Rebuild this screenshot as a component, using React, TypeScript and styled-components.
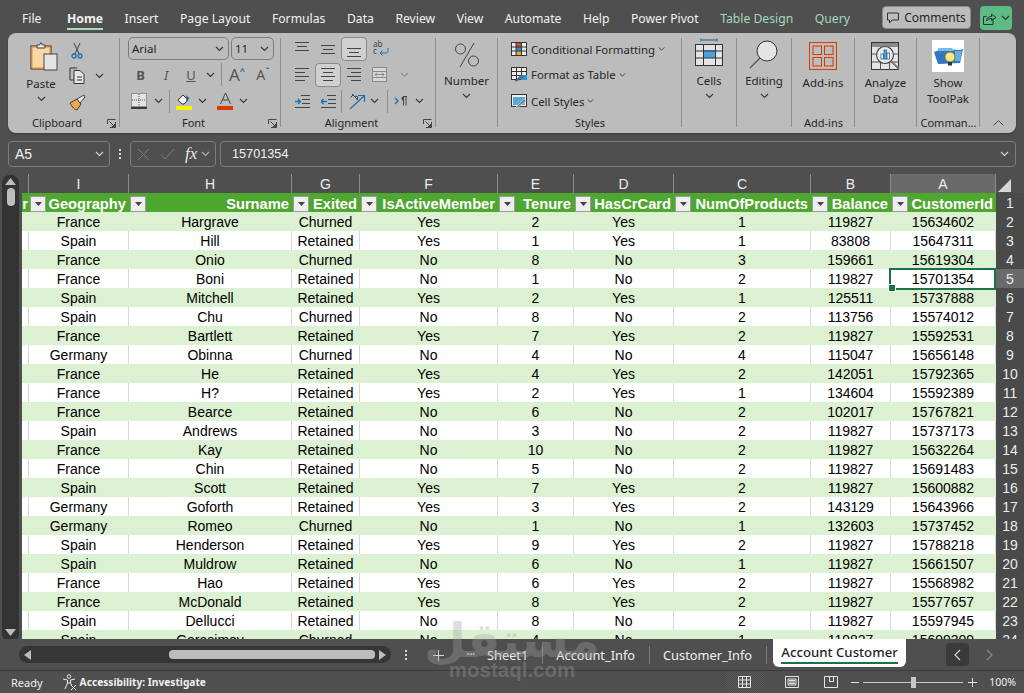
import styled, { createGlobalStyle } from "styled-components";

const GlobalStyle = createGlobalStyle`
  html, body { margin: 0; padding: 0; height: 100%; background: #4f4f4f; overflow: hidden; }
  * { box-sizing: border-box; }
`;

const UI = `"Noto Sans", sans-serif`;
const CELL = `"Liberation Sans", Arial, sans-serif`;
const GRID = "7px 100px 163px 68px 138px 76px 100px 137px 80px 105px 28px";

const columns = ["", "I", "H", "G", "F", "E", "D", "C", "B", "A"];
const headers = ["r", "Geography", "Surname", "Exited", "IsActiveMember", "Tenure", "HasCrCard", "NumOfProducts", "Balance", "CustomerId"];

const rows = [
  ["France", "Hargrave", "Churned", "Yes", "2", "Yes", "1", "119827", "15634602"],
  ["Spain", "Hill", "Retained", "Yes", "1", "Yes", "1", "83808", "15647311"],
  ["France", "Onio", "Churned", "No", "8", "No", "3", "159661", "15619304"],
  ["France", "Boni", "Retained", "No", "1", "No", "2", "119827", "15701354"],
  ["Spain", "Mitchell", "Retained", "Yes", "2", "Yes", "1", "125511", "15737888"],
  ["Spain", "Chu", "Churned", "No", "8", "No", "2", "113756", "15574012"],
  ["France", "Bartlett", "Retained", "Yes", "7", "Yes", "2", "119827", "15592531"],
  ["Germany", "Obinna", "Churned", "No", "4", "No", "4", "115047", "15656148"],
  ["France", "He", "Retained", "Yes", "4", "Yes", "2", "142051", "15792365"],
  ["France", "H?", "Retained", "Yes", "2", "Yes", "1", "134604", "15592389"],
  ["France", "Bearce", "Retained", "No", "6", "No", "2", "102017", "15767821"],
  ["Spain", "Andrews", "Retained", "No", "3", "No", "2", "119827", "15737173"],
  ["France", "Kay", "Retained", "No", "10", "No", "2", "119827", "15632264"],
  ["France", "Chin", "Retained", "No", "5", "No", "2", "119827", "15691483"],
  ["Spain", "Scott", "Retained", "Yes", "7", "Yes", "2", "119827", "15600882"],
  ["Germany", "Goforth", "Retained", "Yes", "3", "Yes", "2", "143129", "15643966"],
  ["Germany", "Romeo", "Churned", "No", "1", "No", "1", "132603", "15737452"],
  ["Spain", "Henderson", "Retained", "Yes", "9", "Yes", "2", "119827", "15788218"],
  ["Spain", "Muldrow", "Retained", "No", "6", "No", "1", "119827", "15661507"],
  ["France", "Hao", "Retained", "Yes", "6", "Yes", "2", "119827", "15568982"],
  ["France", "McDonald", "Retained", "Yes", "8", "Yes", "2", "119827", "15577657"],
  ["Spain", "Dellucci", "Retained", "No", "8", "No", "2", "119827", "15597945"],
  ["Spain", "Gerasimov", "Churned", "No", "4", "No", "1", "119827", "15699309"],
];

const menu = ["File", "Home", "Insert", "Page Layout", "Formulas", "Data", "Review", "View", "Automate", "Help", "Power Pivot"];

// small drawings used across the ribbon
const Chevron = ({ color = "#3a3a3a" }: { color?: string }) => (
  <svg width="9" height="6" viewBox="0 0 9 6">
    <path d="M1 1l3.500 3.500L8 1" fill="none" stroke={color} strokeWidth="1.200" />
  </svg>
);

const Launcher = () => (
  <svg width="9" height="9" viewBox="0 0 9 9">
    <path d="M.5 5V.5H8.500M.5.5" fill="none" stroke="#444" />
    <path d="M8.500 3V8.500H3M2.500 2.500l5 5M5 7.500h2.500V5" fill="none" stroke="#444" />
  </svg>
);

const PasteIcon = () => (
  <svg width="28" height="30" viewBox="0 0 28 30">
    <rect x="1" y="5" width="20" height="23" fill="#fbd9a8" stroke="#3a2a18" />
    <rect x="2" y="6" width="18" height="21" fill="#f9d7a6" stroke="#ee8a2c" />
    <path d="M7 7V4h2.500L11 1.500 12.500 4H15v3z" fill="#e6e6e6" stroke="#444" />
    <rect x="14" y="13" width="13" height="16" fill="#e4e4e4" stroke="#444" />
  </svg>
);

const CutIcon = () => (
  <svg width="12" height="17" viewBox="0 0 12 17">
    <path d="M3 1l5 11M9 1L4 12" stroke="#555" strokeWidth="1.100" fill="none" />
    <circle cx="3" cy="14" r="2" fill="none" stroke="#1c70b0" strokeWidth="1.300" />
    <circle cx="9" cy="14" r="2" fill="none" stroke="#1c70b0" strokeWidth="1.300" />
  </svg>
);

const CopyIcon = () => (
  <svg width="17" height="17" viewBox="0 0 17 17">
    <path d="M8 1H1v12h4" fill="none" stroke="#333" />
    <path d="M5 3.500h6l4 4v9H5z" fill="#e6e6e6" stroke="#333" />
    <path d="M8 10h5M8 13h5" stroke="#333" />
  </svg>
);

const PainterIcon = () => (
  <svg width="17" height="17" viewBox="0 0 17 17">
    <path d="M1 9l7-4 4 5-4 6c-2 0-5-3-7-7z" fill="#f0a848" stroke="#4a3a28" />
    <path d="M8 5l7-4 1 2-5 6z" fill="#e8e8e8" stroke="#444" />
  </svg>
);

const BorderIcon = () => (
  <svg width="16" height="16" viewBox="0 0 16 16">
    <rect x=".5" y=".5" width="15" height="13" fill="#e4e4e4" stroke="#555" strokeDasharray="1 1" />
    <path d="M8 1v13M1 7h14" stroke="#555" strokeDasharray="1 1" />
    <path d="M0 15h16" stroke="#111" strokeWidth="1.500" />
  </svg>
);

const FillIcon = () => (
  <svg width="17" height="17" viewBox="0 0 17 17">
    <path d="M2 7l5-5 5 5-4 4H6z" fill="#f2f2f2" stroke="#333" />
    <path d="M11 8V4l2 2" fill="none" stroke="#1c5f98" strokeWidth="1.400" />
    <rect x="0" y="13" width="16" height="4" fill="#f5f500" />
  </svg>
);

const FontColorIcon = () => (
  <svg width="17" height="17" viewBox="0 0 17 17">
    <path d="M3.500 11L8.500 0l5 11M5.500 7h6" fill="none" stroke="#444" />
    <rect x="0" y="13" width="16" height="4" fill="#d83b01" />
  </svg>
);

const LinesIcon = ({ kind }: { kind: "left" | "center" | "right" | "top" | "middle" | "bottom" }) => {
  const paths = {
    left: "M0 1.500h14M0 5.500h10M0 9.500h14M0 13.500h10",
    center: "M0 1.500h14M2 5.500h10M0 9.500h14M2 13.500h10",
    right: "M0 1.500h14M4 5.500h10M0 9.500h14M4 13.500h10",
    top: "M0 .5h14M2 4.500h10M0 8.500h14",
    middle: "M0 3.500h14M2 7.500h10M0 11.500h14",
    bottom: "M0 6.500h14M2 10.500h10M0 14.500h14",
  };
  return (
    <svg width="14" height="15" viewBox="0 0 14 15">
      <path d={paths[kind]} stroke="#444" fill="none" />
    </svg>
  );
};

const WrapIcon = () => (
  <svg width="16" height="18" viewBox="0 0 16 18">
    <text x="0" y="7" fontSize="8" fill="#444" fontFamily="Noto Sans">ab</text>
    <text x="0" y="14" fontSize="8" fill="#444" fontFamily="Noto Sans">c</text>
    <path d="M15 8v2.500c0 2-1 2.500-2.500 2.500H7M9.500 10.500L7 13l2.500 2.500" fill="none" stroke="#1c70b0" />
  </svg>
);

const MergeIcon = () => (
  <svg width="15" height="15" viewBox="0 0 15 15">
    <rect x=".5" y=".5" width="14" height="14" fill="#d8d8d8" stroke="#8a8a8a" />
    <path d="M.5 4.500h14M.5 10.500h14" stroke="#8a8a8a" />
    <path d="M3 7.500h9M5 5.500l-2 2 2 2M10 5.500l2 2-2 2" fill="none" stroke="#8a8a8a" />
  </svg>
);

const IndentIcon = ({ out }: { out?: boolean }) => (
  <svg width="15" height="13" viewBox="0 0 15 13">
    <path d="M6 .5h9M7 4.500h8M7 8.500h8M0 12.500h15" stroke="#444" fill="none" />
    <path d={out ? "M6 6.500H0M2.500 4L0 6.500 2.500 9" : "M0 6.500h5.500M3 4l2.500 2.500L3 9"} stroke="#1c70b0" strokeWidth="1.300" fill="none" />
  </svg>
);

const OrientIcon = () => (
  <svg width="17" height="17" viewBox="0 0 17 17">
    <path d="M3 1l6 6M1.500 4.500l3-3M6 3l3 1-1 3" fill="none" stroke="#444" />
    <path d="M1 16L15 3M9 2.500h6.500V9" fill="none" stroke="#1c70b0" strokeWidth="1.200" />
  </svg>
);

const RtlIcon = () => (
  <svg width="14" height="14" viewBox="0 0 14 14">
    <path d="M1 4L4 7 1 10" fill="none" stroke="#1c70b0" strokeWidth="1.400" />
    <path d="M9 2.500h4M9.500 2.500v9M12 2.500v9" fill="none" stroke="#444" />
    <path d="M9.500 2.500a2 2 0 000 4z" fill="#444" />
  </svg>
);

const PercentIcon = () => (
  <svg width="26" height="26" viewBox="0 0 26 26">
    <circle cx="6.500" cy="7" r="5" fill="none" stroke="#444" />
    <circle cx="19.500" cy="19" r="5" fill="none" stroke="#444" />
    <path d="M20 1L6 25" stroke="#444" />
  </svg>
);

const CondIcon = () => (
  <svg width="16" height="14" viewBox="0 0 16 14">
    <rect x=".5" y=".5" width="15" height="13" fill="#efefef" stroke="#333" />
    <rect x="5" y="5" width="5.500" height="4" fill="#2d8fd5" />
    <rect x="5" y="1" width="5.500" height="4" fill="#d9482b" />
    <rect x="5" y="9" width="5.500" height="4" fill="#e7a23a" />
    <path d="M5 .5v13M10.500.5v13M.5 5h15M.5 9h15" stroke="#333" />
  </svg>
);

const TableIcon = () => (
  <svg width="16" height="15" viewBox="0 0 16 15">
    <rect x=".5" y=".5" width="15" height="12" fill="#efefef" stroke="#333" />
    <path d="M5.500.5v12M10.500.5v12M.5 4.500h15M.5 8.500h15" stroke="#333" />
    <rect x="10" y="8" width="6" height="5" fill="#2d8fd5" />
    <path d="M4 14l6-6 2 2-6 4z" fill="#6b6b6b" stroke="#1c5f98" strokeWidth=".6" />
  </svg>
);

const StyleIcon = () => (
  <svg width="16" height="15" viewBox="0 0 16 15">
    <rect x=".5" y=".5" width="15" height="12" fill="#f0f0f0" stroke="#333" />
    <rect x="2" y="3" width="12" height="8" fill="#58a9e0" />
    <path d="M4 14l9-9 2 2-9 7z" fill="#7a7a7a" stroke="#e8e8e8" strokeWidth=".6" />
  </svg>
);

const CellsIcon = () => (
  <svg width="28" height="28" viewBox="0 0 28 28">
    <path d="M6 .5v3M22 .5v3M6 2h16" stroke="#1c5f98" fill="none" />
    <rect x=".5" y="6.500" width="27" height="21" fill="#e4e4e4" stroke="#333" />
    <rect x="8" y="12" width="13" height="8" fill="#4f9fdc" />
    <path d="M8.500 6.500v21M20.500 6.500v21M.5 13h27M.5 20h27" stroke="#333" />
  </svg>
);

const SearchIcon = () => (
  <svg width="30" height="30" viewBox="0 0 30 30">
    <circle cx="18" cy="11" r="10" fill="#e4e4e4" stroke="#333" />
    <path d="M11 18L1 28" stroke="#555" strokeWidth="1.200" />
  </svg>
);

const AddinsIcon = () => (
  <svg width="28" height="28" viewBox="0 0 28 28">
    <rect x=".5" y=".5" width="27" height="27" fill="none" stroke="#d83b01" />
    <rect x="4" y="4" width="8.500" height="8.500" fill="none" stroke="#d83b01" />
    <rect x="15.500" y="4" width="8.500" height="8.500" fill="none" stroke="#d83b01" />
    <rect x="4" y="15.500" width="8.500" height="8.500" fill="none" stroke="#d83b01" />
    <rect x="15.500" y="15.500" width="8.500" height="8.500" fill="none" stroke="#d83b01" />
  </svg>
);

const AnalyzeIcon = () => (
  <svg width="29" height="29" viewBox="0 0 29 29">
    <rect x=".5" y=".5" width="27" height="27" fill="#e4e4e4" stroke="#333" />
    <rect x="1" y="1" width="26" height="4" fill="#8a8a8a" />
    <path d="M9.500 5v23M18.500 5v23M1 12h26M1 20h26" stroke="#555" />
    <circle cx="14" cy="13" r="8.500" fill="#ececec" stroke="#444" strokeWidth="1.200" />
    <path d="M20 19l8 8" stroke="#777" strokeWidth="2" />
    <rect x="10" y="12" width="2.500" height="5" fill="#fff" stroke="#1c5f98" strokeWidth=".8" />
    <rect x="13" y="8" width="2.500" height="9" fill="#5aa6e0" stroke="#1c5f98" strokeWidth=".8" />
    <rect x="16" y="11" width="2.500" height="6" fill="#fff" stroke="#1c5f98" strokeWidth=".8" />
  </svg>
);

const ToolPakIcon = () => (
  <svg width="32" height="32" viewBox="0 0 32 32">
    <rect width="32" height="32" fill="#fff" />
    <path d="M2 12l8-3 18 1 3-1-3 14-22 1z" fill="#2f78c0" />
    <path d="M6 8h14l2 3H6z" fill="#7cb8e6" />
    <path d="M23 11h7l-2 10h-5z" fill="#6aaee0" />
    <circle cx="18" cy="17" r="5" fill="#f7e88a" stroke="#8a7a30" />
    <rect x="16" y="22" width="4" height="3.500" fill="#333" />
  </svg>
);

const AccessIcon = () => (
  <svg width="15" height="16" viewBox="0 0 15 16">
    <circle cx="7" cy="2.500" r="1.800" fill="none" stroke="#e8e8e8" />
    <path d="M1 5l4.500 1v3L3 15M13 5l-4.500 1v3l1 2M5.500 9h3" fill="none" stroke="#e8e8e8" />
    <path d="M9 11l5 5M14 11l-5 5" stroke="#e8e8e8" />
  </svg>
);

const FilterArrow = () => (
  <svg width="7" height="4" viewBox="0 0 7 4">
    <path d="M0 0h7L3.500 4z" fill="#444" />
  </svg>
);

export default function App() {
  return (
    <Page>
      <GlobalStyle />
      <MenuBar>
        {menu.map((m) => (
          <MenuItem key={m} $active={m === "Home"}>{m}</MenuItem>
        ))}
        <MenuItem $tool>Table Design</MenuItem>
        <MenuItem $tool>Query</MenuItem>
        <MenuRight>
          <CommentsButton>
            <svg width="12" height="12" viewBox="0 0 12 12">
              <path d="M.5 1h11v7H5L2.500 11V8h-2z" fill="none" stroke="#333" />
            </svg>
            Comments
          </CommentsButton>
          <ShareButton>
            <svg width="14" height="13" viewBox="0 0 14 13">
              <path d="M10 6.500v6H.5v-8h3" fill="none" stroke="#1e3a2a" />
              <path d="M3.500 9c0-3 2-4.500 5-4.500V2l4.500 3.500L8.500 8.500V6.500c-2.500 0-4 1-5 2.500z" fill="none" stroke="#1e3a2a" />
            </svg>
            <Chevron color="#1e3a2a" />
          </ShareButton>
        </MenuRight>
      </MenuBar>

      <Ribbon>
        <Group $w={112}>
          <GroupBody $pl={15}>
            <LargeColumn $w={36}>
              <IconSlot $h={39} $pt={8} $pl={5}><PasteIcon /></IconSlot>
              <LargeLabel>Paste</LargeLabel>
              <ChevronSlot><Chevron /></ChevronSlot>
            </LargeColumn>
            <ClipColumn>
              <SmallRow><Btn $w={24}><CutIcon /></Btn></SmallRow>
              <SmallRow><Btn $w={24}><CopyIcon /></Btn><Btn $w={22} $ml={-1}><Chevron /></Btn></SmallRow>
              <SmallRow><Btn $w={24}><PainterIcon /></Btn></SmallRow>
            </ClipColumn>
          </GroupBody>
          <GroupLabel $launcher>Clipboard<LauncherSlot><Launcher /></LauncherSlot></GroupLabel>
        </Group>

        <Group $w={161}>
          <GroupBody $pl={8}>
            <SmallRows>
              <SmallRow>
                <Select $w={101}>Arial<Chevron /></Select>
                <Select $w={43} $ml={2}>11<Chevron /></Select>
              </SmallRow>
              <SmallRow>
                <Btn $w={25}><FontLetter $bold>B</FontLetter></Btn>
                <Btn $w={26}><FontLetter $italic>I</FontLetter></Btn>
                <Btn $w={24}><FontLetter $under>U</FontLetter></Btn>
                <Btn $w={14}><Chevron /></Btn>
                <VSep $ml={4} $mr={3} />
                <Btn $w={24}><GrowLetter>A<sup>^</sup></GrowLetter></Btn>
                <Btn $w={28}><GrowLetter $small>A<sup>ˇ</sup></GrowLetter></Btn>
              </SmallRow>
              <SmallRow>
                <Btn $w={22}><BorderIcon /></Btn>
                <Btn $w={16}><Chevron /></Btn>
                <VSep $ml={3} $mr={2} />
                <Btn $w={24}><FillIcon /></Btn>
                <Btn $w={12}><Chevron /></Btn>
                <Btn $w={22} $ml={6}><FontColorIcon /></Btn>
                <Btn $w={14}><Chevron /></Btn>
              </SmallRow>
            </SmallRows>
          </GroupBody>
          <GroupLabel $launcher>Font<LauncherSlot><Launcher /></LauncherSlot></GroupLabel>
        </Group>

        <Group $w={155}>
          <GroupBody $pl={8}>
            <SmallRows>
              <SmallRow>
                <Btn $w={26}><LinesIcon kind="top" /></Btn>
                <Btn $w={26}><LinesIcon kind="middle" /></Btn>
                <Btn $w={26} $active><LinesIcon kind="bottom" /></Btn>
                <Btn $w={28}><WrapIcon /></Btn>
              </SmallRow>
              <SmallRow>
                <Btn $w={26}><LinesIcon kind="left" /></Btn>
                <Btn $w={26} $active><LinesIcon kind="center" /></Btn>
                <Btn $w={26}><LinesIcon kind="right" /></Btn>
                <Btn $w={25}><MergeIcon /></Btn>
                <Btn $w={24}><Chevron color="#8e8e8e" /></Btn>
              </SmallRow>
              <SmallRow>
                <Btn $w={26}><IndentIcon /></Btn>
                <Btn $w={26}><IndentIcon out /></Btn>
                <VSep $ml={0} $mr={0} />
                <Btn $w={24} $ml={3}><OrientIcon /></Btn>
                <Btn $w={10}><Chevron /></Btn>
                <VSep $ml={8} $mr={4} />
                <Btn $w={18}><RtlIcon /></Btn>
                <Btn $w={18}><Chevron /></Btn>
              </SmallRow>
            </SmallRows>
          </GroupBody>
          <GroupLabel $launcher>Alignment<LauncherSlot><Launcher /></LauncherSlot></GroupLabel>
        </Group>

        <Group $w={62}>
          <GroupBody>
            <LargeColumn $w={61}>
              <IconSlot $h={36} $pt={9}><PercentIcon /></IconSlot>
              <LargeLabel>Number</LargeLabel>
              <ChevronSlot><Chevron /></ChevronSlot>
            </LargeColumn>
          </GroupBody>
          <GroupLabel />
        </Group>

        <Group $w={184}>
          <GroupBody $pl={13}>
            <StyleRows>
              <StyleRow><CondIcon />Conditional Formatting<Chevron /></StyleRow>
              <StyleRow><TableIcon />Format as Table<Chevron /></StyleRow>
              <StyleRow><StyleIcon />Cell Styles<Chevron /></StyleRow>
            </StyleRows>
          </GroupBody>
          <GroupLabel>Styles</GroupLabel>
        </Group>

        <Group $w={55}>
          <GroupBody>
            <LargeColumn $w={54}>
              <IconSlot $h={36} $pt={5}><CellsIcon /></IconSlot>
              <LargeLabel>Cells</LargeLabel>
              <ChevronSlot><Chevron /></ChevronSlot>
            </LargeColumn>
          </GroupBody>
          <GroupLabel />
        </Group>

        <Group $w={55}>
          <GroupBody>
            <LargeColumn $w={54}>
              <IconSlot $h={36} $pt={7}><SearchIcon /></IconSlot>
              <LargeLabel>Editing</LargeLabel>
              <ChevronSlot><Chevron /></ChevronSlot>
            </LargeColumn>
          </GroupBody>
          <GroupLabel />
        </Group>

        <Group $w={63}>
          <GroupBody>
            <LargeColumn $w={62}>
              <IconSlot $h={38} $pt={9}><AddinsIcon /></IconSlot>
              <LargeLabel>Add-ins</LargeLabel>
            </LargeColumn>
          </GroupBody>
          <GroupLabel>Add-ins</GroupLabel>
        </Group>

        <Group $w={62}>
          <GroupBody>
            <LargeColumn $w={61}>
              <IconSlot $h={38} $pt={9}><AnalyzeIcon /></IconSlot>
              <LargeLabel>Analyze<br />Data</LargeLabel>
            </LargeColumn>
          </GroupBody>
          <GroupLabel />
        </Group>

        <Group $w={63}>
          <GroupBody>
            <LargeColumn $w={62}>
              <IconSlot $h={38} $pt={7}><ToolPakIcon /></IconSlot>
              <LargeLabel>Show<br />ToolPak</LargeLabel>
            </LargeColumn>
          </GroupBody>
          <GroupLabel>Comman...</GroupLabel>
        </Group>

        <CollapseSlot>
          <svg width="11" height="6" viewBox="0 0 11 6">
            <path d="M.5 5.500l5-5 5 5" fill="none" stroke="#444" />
          </svg>
        </CollapseSlot>
      </Ribbon>

      <FormulaBar>
        <NameBox>A5<Chevron color="#d0d0d0" /></NameBox>
        <DotsV><span /><span /><span /></DotsV>
        <FxBox>
          <svg width="13" height="13" viewBox="0 0 13 13"><path d="M1 1l11 11M12 1L1 12" stroke="#7c7c7c" fill="none" /></svg>
          <svg width="15" height="12" viewBox="0 0 15 12"><path d="M1 6l4 5L14 1" stroke="#7c7c7c" fill="none" /></svg>
          <FxText>fx</FxText>
          <Chevron color="#b0b0b0" />
        </FxBox>
        <FormulaInput>15701354<Chevron color="#d0d0d0" /></FormulaInput>
      </FormulaBar>

      <Main>
        <VScroll>
          <svg width="11" height="7" viewBox="0 0 11 7"><path d="M5.500 0L11 7H0z" fill="#bdbdbd" /></svg>
          <VThumb />
          <VArrowDown>
            <svg width="11" height="7" viewBox="0 0 11 7"><path d="M5.500 7L11 0H0z" fill="#bdbdbd" /></svg>
          </VArrowDown>
        </VScroll>
        <Sheet>
          <LetterRow>
            {columns.map((c, i) => (
              <Letter key={i} $selected={c === "A"}>{c}</Letter>
            ))}
            <Corner>
              <svg width="13" height="13" viewBox="0 0 13 13"><path d="M13 0v13H0z" fill="#d6d6d6" /></svg>
            </Corner>
          </LetterRow>
          <TableRow>
            {headers.map((h, i) => (
              <HeadCell key={h}>
                {i > 0 && (
                  <FilterButton><FilterArrow /></FilterButton>
                )}
                <HeadText>{h}</HeadText>
              </HeadCell>
            ))}
            <RowNumber>1</RowNumber>
          </TableRow>
          {rows.map((r, i) => {
            const n = i + 2;
            return (
              <TableRow key={n}>
                <DataCell $green={n % 2 === 0} />
                {r.map((v, j) => (
                  <DataCell key={j} $green={n % 2 === 0} $selected={n === 5 && j === 8}>{v}</DataCell>
                ))}
                <RowNumber $selected={n === 5}>{n}</RowNumber>
              </TableRow>
            );
          })}
        </Sheet>
      </Main>

      <TabBar>
        <HScroll>
          <svg width="7" height="10" viewBox="0 0 7 10"><path d="M0 5l7-5v10z" fill="#bdbdbd" /></svg>
          <HThumb />
          <svg width="7" height="10" viewBox="0 0 7 10"><path d="M7 5L0 0v10z" fill="#bdbdbd" /></svg>
        </HScroll>
        <DotsV $ml={5}><span /><span /><span /></DotsV>
        <PlusSign>
          <svg width="11" height="11" viewBox="0 0 11 11"><path d="M5.500 0v11M0 5.500h11" stroke="#d8d8d8" /></svg>
        </PlusSign>
        <More>•••</More>
        <Tab>Sheet1</Tab>
        <TabSep />
        <Tab>Account_Info</Tab>
        <TabSep />
        <Tab>Customer_Info</Tab>
        <TabSep />
        <ActiveTab>Account Customer</ActiveTab>
        <NavBack>
          <svg width="7" height="12" viewBox="0 0 7 12"><path d="M6 1L1 6l5 5" fill="none" stroke="#d8d8d8" strokeWidth="1.200" /></svg>
        </NavBack>
        <NavForward>
          <svg width="7" height="12" viewBox="0 0 7 12"><path d="M1 1l5 5-5 5" fill="none" stroke="#8a8a8a" strokeWidth="1.200" /></svg>
        </NavForward>
      </TabBar>

      <StatusBar>
        <StatusText>Ready</StatusText>
        <AccessWrap>
          <AccessIcon />
          <AccessText>Accessibility: Investigate</AccessText>
        </AccessWrap>
        <StatusRight>
          <ViewBtn $w={39} $active>
            <svg width="13" height="12" viewBox="0 0 13 12"><path d="M.5.500h12v11H.5zM.5 4h12M.5 8h12M4.500.5v11M8.500.5v11" fill="none" stroke="#e4e4e4" /></svg>
          </ViewBtn>
          <ViewBtn $w={56}>
            <svg width="14" height="12" viewBox="0 0 14 12"><path d="M.5.500h13v11H.5zM3 3h8v6H3zM4 4.500h6M4 6h6M4 7.500h6" fill="none" stroke="#e4e4e4" /></svg>
          </ViewBtn>
          <ViewBtn $w={22}>
            <svg width="14" height="12" viewBox="0 0 14 12"><path d="M.5.500h13v11H.5zM5.500.5v5h4v-5" fill="none" stroke="#e4e4e4" /></svg>
          </ViewBtn>
          <ZoomMinus />
          <ZoomTrack><ZoomThumb /></ZoomTrack>
          <PlusSign $small>
            <svg width="9" height="9" viewBox="0 0 9 9"><path d="M4.500 0v9M0 4.500h9" stroke="#e4e4e4" /></svg>
          </PlusSign>
          <ZoomValue>100%</ZoomValue>
        </StatusRight>
      </StatusBar>

      <Watermark>
        <WatermarkArabic>مستقل</WatermarkArabic>
        <WatermarkLatin>mostaql.com</WatermarkLatin>
      </Watermark>
    </Page>
  );
}

const Page = styled.div`
  position: relative;
  width: 1024px;
  height: 693px;
  background: #4f4f4f;
  font-family: ${UI};
  display: flex;
  flex-direction: column;
  overflow: hidden;
`;

// top menu
const MenuBar = styled.div`
  height: 33px;
  display: flex;
  align-items: flex-start;
  gap: 21.500px;
  padding-left: 22px;
`;

const MenuItem = styled.div<{ $active?: boolean; $tool?: boolean }>`
  height: 30px;
  line-height: 37px;
  font-size: 12.200px;
  white-space: nowrap;
  color: ${(p) => (p.$tool ? "#a6d8bd" : "#f2f2f2")};
  font-weight: ${(p) => (p.$active ? 700 : 400)};
  border-bottom: ${(p) => (p.$active ? "2px solid #a6dcc0" : "none")};
  &:first-child {
    margin-right: 4px;
  }
`;

const MenuRight = styled.div`
  margin-left: auto;
  margin-right: 12px;
  display: flex;
  gap: 9px;
  padding-top: 6px;
`;

const CommentsButton = styled.div`
  width: 89px;
  height: 23px;
  background: #bcbcbc;
  border: 1px solid #8a8a8a;
  border-radius: 4px;
  color: #262626;
  font-size: 12px;
  display: flex;
  align-items: center;
  justify-content: center;
  gap: 5px;
`;

const ShareButton = styled.div`
  width: 32px;
  height: 24px;
  background: #5fbb85;
  border-radius: 4px;
  display: flex;
  align-items: center;
  justify-content: center;
  gap: 4px;
`;

// ribbon
const Ribbon = styled.div`
  margin: 0 8px;
  height: 100px;
  background: #bcbcbc;
  border-radius: 8px;
  display: flex;
  box-shadow: 0 1px 2px #3a3a3a;
`;

const Group = styled.div<{ $w: number }>`
  position: relative;
  width: ${(p) => p.$w}px;
  flex: none;
  padding-top: 4px;
  display: flex;
  flex-direction: column;
  &::after {
    content: "";
    position: absolute;
    right: 0;
    top: 5px;
    bottom: 6px;
    width: 1px;
    background: #8e8e8e;
  }
`;

const GroupBody = styled.div<{ $pl?: number }>`
  height: 78px;
  display: flex;
  padding-left: ${(p) => p.$pl ?? 0}px;
`;

const GroupLabel = styled.div<{ $launcher?: boolean }>`
  position: relative;
  height: 16px;
  line-height: 16px;
  text-align: center;
  font-size: 11px;
  color: #262626;
  white-space: nowrap;
  padding-right: ${(p) => (p.$launcher ? 14 : 0)}px;
`;

const LauncherSlot = styled.span`
  position: absolute;
  right: 4px;
  top: 4px;
  line-height: 0;
`;

const LargeColumn = styled.div<{ $w: number }>`
  width: ${(p) => p.$w}px;
  display: flex;
  flex-direction: column;
  align-items: center;
`;

const IconSlot = styled.div<{ $h: number; $pt: number; $pl?: number }>`
  height: ${(p) => p.$h}px;
  padding-top: ${(p) => p.$pt - 4}px;
  padding-left: ${(p) => p.$pl ?? 0}px;
  display: flex;
  justify-content: center;
`;

const LargeLabel = styled.div`
  font-size: 11.500px;
  line-height: 16px;
  color: #262626;
  text-align: center;
  white-space: nowrap;
`;

const ChevronSlot = styled.div`
  height: 14px;
  display: flex;
  align-items: center;
  line-height: 0;
`;

const ClipColumn = styled.div`
  margin-left: 6px;
  padding-top: 1px;
  display: grid;
  grid-template-rows: 24px 27px 26px;
`;

const SmallRows = styled.div`
  display: grid;
  grid-template-rows: 24px 27px 26px;
`;

const SmallRow = styled.div`
  display: flex;
  align-items: center;
`;

const Btn = styled.div<{ $w: number; $ml?: number; $active?: boolean }>`
  width: ${(p) => p.$w}px;
  height: 24px;
  margin-left: ${(p) => p.$ml ?? 0}px;
  flex: none;
  display: flex;
  align-items: center;
  justify-content: center;
  line-height: 0;
  border-radius: 4px;
  background: ${(p) => (p.$active ? "#d0d0d0" : "transparent")};
  border: ${(p) => (p.$active ? "1px solid #8a8a8a" : "none")};
`;

const Select = styled.div<{ $w: number; $ml?: number }>`
  width: ${(p) => p.$w}px;
  height: 23px;
  margin-left: ${(p) => p.$ml ?? 0}px;
  margin-bottom: 1px;
  flex: none;
  border: 1px solid #7c7c7c;
  border-radius: 5px;
  padding: 0 4px 0 3px;
  display: flex;
  align-items: center;
  justify-content: space-between;
  font-size: 11.500px;
  color: #262626;
`;

const VSep = styled.div<{ $ml: number; $mr: number }>`
  width: 1px;
  height: 23px;
  flex: none;
  background: #8e8e8e;
  margin-left: ${(p) => p.$ml}px;
  margin-right: ${(p) => p.$mr}px;
`;

const FontLetter = styled.span<{ $bold?: boolean; $italic?: boolean; $under?: boolean }>`
  font-family: ${UI};
  font-size: 13px;
  line-height: 14px;
  color: #555;
  font-weight: ${(p) => (p.$bold ? 700 : 400)};
  font-style: ${(p) => (p.$italic ? "italic" : "normal")};
  text-decoration: ${(p) => (p.$under ? "underline" : "none")};
`;

const GrowLetter = styled.span<{ $small?: boolean }>`
  font-size: ${(p) => (p.$small ? 14 : 17)}px;
  line-height: 18px;
  color: #555;
  sup {
    font-size: 9px;
    line-height: 0;
    color: #1c70b0;
    font-weight: 700;
  }
`;

const StyleRows = styled.div`
  display: grid;
  grid-template-rows: 24px 27px 26px;
`;

const StyleRow = styled.div`
  display: flex;
  align-items: center;
  gap: 4px;
  font-size: 11.400px;
  color: #262626;
  white-space: nowrap;
  svg:last-child {
    margin-left: -1px;
    width: 7px;
  }
`;

const CollapseSlot = styled.div`
  flex: 1;
  display: flex;
  align-items: flex-end;
  justify-content: center;
  padding-bottom: 7px;
`;

// formula bar
const FormulaBar = styled.div`
  height: 26px;
  margin: 8px 8px 0;
  display: flex;
  align-items: stretch;
`;

const FieldBox = styled.div`
  border: 1px solid #7c7c7c;
  border-radius: 4px;
  color: #f2f2f2;
  display: flex;
  align-items: center;
`;

const NameBox = styled(FieldBox)`
  width: 102px;
  padding: 0 5px 0 6px;
  justify-content: space-between;
  font-family: ${CELL};
  font-size: 14px;
`;

const DotsV = styled.div<{ $ml?: number }>`
  width: 20px;
  margin-left: ${(p) => p.$ml ?? 0}px;
  display: flex;
  flex-direction: column;
  align-items: center;
  justify-content: center;
  gap: 2px;
  align-self: stretch;
  span {
    width: 2px;
    height: 2px;
    background: #d8d8d8;
  }
`;

const FxBox = styled(FieldBox)`
  width: 86px;
  padding-left: 6px;
  gap: 10px;
  svg:last-child {
    margin-left: -6px;
  }
`;

const FxText = styled.span`
  font-family: "Liberation Serif", serif;
  font-style: italic;
  font-size: 17px;
  color: #e8e8e8;
`;

const FormulaInput = styled(FieldBox)`
  flex: 1;
  margin-left: 4px;
  padding: 0 6px 0 11px;
  justify-content: space-between;
  font-family: ${CELL};
  font-size: 12.700px;
`;

// sheet
const Main = styled.div`
  height: 472px;
  display: flex;
  overflow: hidden;
`;

const VScroll = styled.div`
  width: 17px;
  height: 467px;
  margin: 8px 3px 0 2px;
  flex: none;
  background: #333;
  border-radius: 8px;
  display: flex;
  flex-direction: column;
  align-items: center;
  padding-top: 3px;
`;

const VThumb = styled.div`
  width: 8px;
  height: 18px;
  margin-top: 3px;
  border-radius: 4px;
  background: #bdbdbd;
`;

const VArrowDown = styled.div`
  margin-top: auto;
  margin-bottom: 6px;
  line-height: 0;
`;

const Sheet = styled.div`
  flex: 1;
  padding-top: 7px;
  overflow: hidden;
`;

const LetterRow = styled.div`
  display: grid;
  grid-template-columns: ${GRID};
  height: 19px;
`;

const Letter = styled.div<{ $selected?: boolean }>`
  font-family: ${CELL};
  font-size: 14px;
  line-height: 21px;
  text-align: center;
  color: #ececec;
  background: ${(p) => (p.$selected ? "#6a6a6a" : "transparent")};
  border-right: 1px solid #8a8a8a;
  border-bottom: ${(p) => (p.$selected ? "2px solid #1e7145" : "1px solid #8a8a8a")};
`;

const Corner = styled.div`
  padding: 5px 0 0 2px;
  line-height: 0;
  border-bottom: 1px solid #8a8a8a;
`;

const TableRow = styled.div`
  display: grid;
  grid-template-columns: ${GRID};
  height: 19px;
`;

const HeadCell = styled.div`
  background: #4ea72e;
  display: flex;
  align-items: center;
  justify-content: space-between;
  padding: 0 3px 0 1px;
  overflow: hidden;
  &:first-child {
    justify-content: flex-end;
    padding: 0 1px 0 0;
  }
`;

const FilterButton = styled.div`
  width: 16px;
  height: 16px;
  flex: none;
  background: #eeeeee;
  border: 1px solid #9a9a9a;
  display: flex;
  align-items: center;
  justify-content: center;
`;

const HeadText = styled.span`
  font-family: ${CELL};
  font-weight: 700;
  font-size: 14.700px;
  color: #fff;
  white-space: nowrap;
`;

const DataCell = styled.div<{ $green: boolean; $selected?: boolean }>`
  position: relative;
  z-index: ${(p) => (p.$selected ? 1 : 0)};
  font-family: ${CELL};
  font-size: 14px;
  line-height: 20px;
  text-align: center;
  color: #000;
  background: ${(p) => (p.$green ? "#dcf1d1" : "#fff")};
  border-bottom: 1px solid #92d37c;
  border-right: 1px solid ${(p) => (p.$green ? "#dcf1d1" : "#d9d9d9")};
  ${(p) =>
    p.$selected &&
    `
    &::before {
      content: "";
      position: absolute;
      left: -2px;
      top: -1px;
      right: -1px;
      bottom: -1px;
      border: 2px solid #1e7145;
    }
    &::after {
      content: "";
      position: absolute;
      left: -3px;
      bottom: -3px;
      width: 6px;
      height: 6px;
      background: #1e7145;
      border: 1px solid #fff;
    }
  `}
`;

const RowNumber = styled.div<{ $selected?: boolean }>`
  font-family: ${CELL};
  font-size: 14px;
  line-height: 20px;
  text-align: center;
  color: #ececec;
  background: ${(p) => (p.$selected ? "#6a6a6a" : "#4a4a4a")};
  border-bottom: 1px solid #6a6a6a;
`;

// sheet tabs
const TabBar = styled.div`
  height: 32px;
  display: flex;
  align-items: flex-start;
  border-bottom: 1px solid #3a3a3a;
  position: relative;
`;

const HScroll = styled.div`
  width: 372px;
  height: 17px;
  margin: 7px 0 0 19px;
  flex: none;
  background: #363636;
  border-radius: 9px;
  display: flex;
  align-items: center;
  padding: 0 5px;
`;

const HThumb = styled.div`
  width: 206px;
  height: 9px;
  margin: 0 4px 0 auto;
  border-radius: 4px;
  background: #bdbdbd;
`;

const PlusSign = styled.div<{ $small?: boolean }>`
  width: ${(p) => (p.$small ? 18 : 22)}px;
  height: ${(p) => (p.$small ? "auto" : "32px")};
  margin-left: ${(p) => (p.$small ? 0 : 11)}px;
  display: flex;
  align-items: center;
  justify-content: center;
  line-height: 0;
`;

const More = styled.div`
  width: 7px;
  margin-left: 18px;
  line-height: 32px;
  font-size: 7px;
  color: #d8d8d8;
  white-space: nowrap;
`;

const Tab = styled.div`
  margin: 0 14px 0 13px;
  line-height: 33px;
  font-size: 12.800px;
  color: #efefef;
  white-space: nowrap;
`;

const TabSep = styled.div`
  width: 1px;
  height: 18px;
  margin-top: 7px;
  flex: none;
  background: #7c7c7c;
`;

const ActiveTab = styled.div`
  width: 133px;
  height: 28px;
  margin-left: 6px;
  flex: none;
  background: #fff;
  border-radius: 0 0 6px 6px;
  color: #1f1f1f;
  font-size: 13.200px;
  font-weight: 500;
  line-height: 27px;
  white-space: nowrap;
  text-align: center;
  position: relative;
  &::after {
    content: "";
    position: absolute;
    left: 8px;
    right: 8px;
    bottom: 3px;
    height: 2px;
    background: #1e7145;
  }
`;

const NavBack = styled.div`
  width: 23px;
  height: 23px;
  margin: 4px 0 0 40px;
  background: #3a3a3a;
  border-radius: 4px;
  display: flex;
  align-items: center;
  justify-content: center;
`;

const NavForward = styled.div`
  width: 23px;
  height: 23px;
  margin: 4px 0 0 9px;
  display: flex;
  align-items: center;
  justify-content: center;
`;

// status bar
const StatusBar = styled.div`
  height: 22px;
  display: flex;
  align-items: center;
  padding: 0 8px 0 11px;
  color: #efefef;
  font-size: 11px;
`;

const StatusText = styled.span``;

const AccessWrap = styled.div`
  margin-left: 19px;
  display: flex;
  align-items: center;
  gap: 3px;
`;

const AccessText = styled.span`
  font-weight: 700;
  font-size: 10.200px;
`;

const StatusRight = styled.div`
  margin-left: auto;
  display: flex;
  align-items: center;
  height: 100%;
`;

const ViewBtn = styled.div<{ $w: number; $active?: boolean }>`
  width: ${(p) => p.$w}px;
  flex: none;
  height: 100%;
  display: flex;
  align-items: center;
  justify-content: center;
  background: ${(p) =>
    p.$active ? "repeating-conic-gradient(#5c5c5c 0 25%, #474747 0 50%) 0 0 / 2px 2px" : "transparent"};
`;

const ZoomMinus = styled.div`
  width: 8px;
  height: 1px;
  margin-left: 9px;
  background: #e4e4e4;
`;

const ZoomTrack = styled.div`
  position: relative;
  width: 100px;
  height: 1px;
  margin-left: 4px;
  background: #c8c8c8;
`;

const ZoomThumb = styled.div`
  position: absolute;
  left: 48px;
  top: -5px;
  width: 5px;
  height: 11px;
  background: #c8c8c8;
`;

const ZoomValue = styled.span`
  margin-left: 8px;
  font-size: 10.500px;
`;

// watermark
const Watermark = styled.div`
  position: absolute;
  left: 449px;
  top: 618px;
  width: 126px;
  display: flex;
  flex-direction: column;
  align-items: center;
  pointer-events: none;
  color: rgba(162, 162, 162, 0.37);
`;

const WatermarkArabic = styled.div`
  font-family: "DejaVu Sans", sans-serif;
  font-weight: 700;
  font-size: 48px;
  line-height: 44px;
`;

const WatermarkLatin = styled.div`
  font-family: "Liberation Sans", Arial, sans-serif;
  font-weight: 700;
  font-size: 20.500px;
  line-height: 16px;
  white-space: nowrap;
`;
